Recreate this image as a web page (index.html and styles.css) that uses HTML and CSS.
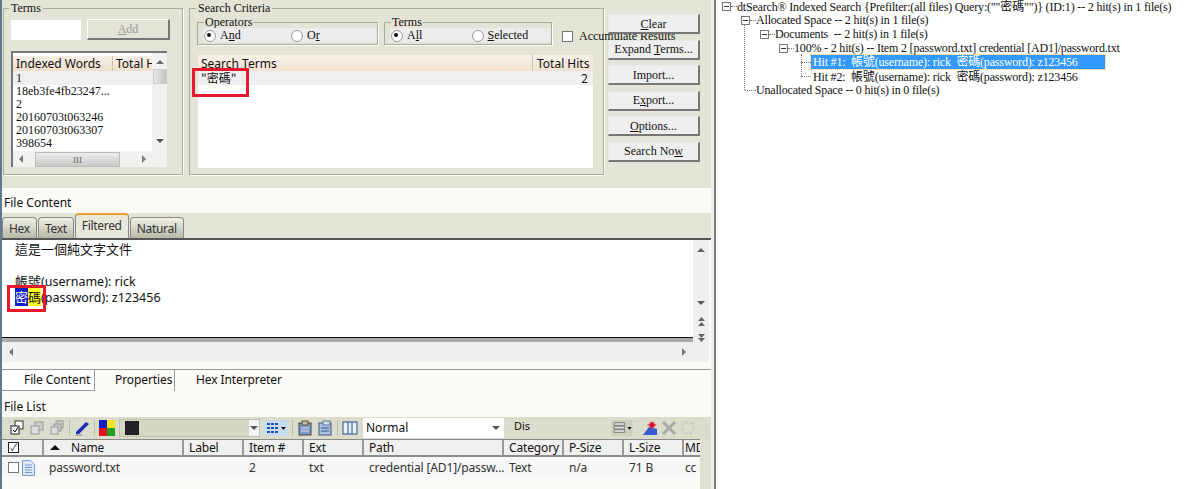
FILE: index.html
```html
<!DOCTYPE html>
<html lang="en">
<head>
    <meta charset="UTF-8">
    <title>dtSearch results</title>
    <link rel="stylesheet" href="styles.css">
</head>
<body>
    <div class="left">
        <div class="search-panel">
            <fieldset class="group terms-group">
                <legend>Terms</legend>
                <div class="add-row">
                    <div class="text-box"></div>
                    <button class="btn add-btn" type="button"><u>A</u>dd</button>
                </div>
                <div class="words">
                    <div class="words-main">
                        <div class="words-head"><span class="w-word">Indexed Words</span><span class="w-total">Total H</span></div>
                        <div class="words-row first">1</div>
                        <div class="words-row">18eb3fe4fb23247...</div>
                        <div class="words-row">2</div>
                        <div class="words-row">20160703t063246</div>
                        <div class="words-row">20160703t063307</div>
                        <div class="words-row">398654</div>
                    </div>
                    <div class="vscroll">
                        <span class="arrow up"></span>
                        <span class="thumb"></span>
                        <span class="arrow down"></span>
                    </div>
                    <div class="hscroll">
                        <span class="arrow left-a"></span>
                        <span class="hthumb">III</span>
                        <span class="arrow right-a"></span>
                    </div>
                </div>
            </fieldset>

            <fieldset class="group criteria">
                <legend>Search Criteria</legend>
                <div class="options">
                    <fieldset class="group sub operators">
                        <legend>Operators</legend>
                        <label class="radio on">A<u>n</u>d</label>
                        <label class="radio">O<u>r</u></label>
                    </fieldset>
                    <fieldset class="group sub scope">
                        <legend>Terms</legend>
                        <label class="radio on">A<u>l</u>l</label>
                        <label class="radio"><u>S</u>elected</label>
                    </fieldset>
                    <label class="accumulate"><span class="check"></span>Accumulate Results</label>
                </div>
                <div class="terms-table">
                    <div class="terms-head"><span class="t-term">Search Terms</span><span class="t-hits">Total Hits</span></div>
                    <div class="terms-row"><span>"密碼"</span><span>2</span></div>
                </div>
            </fieldset>

            <div class="actions">
                <button class="btn" type="button"><u>C</u>lear</button>
                <button class="btn" type="button">Expand <u>T</u>erms...</button>
                <button class="btn" type="button">Import...</button>
                <button class="btn" type="button">E<u>x</u>port...</button>
                <button class="btn" type="button"><u>O</u>ptions...</button>
                <button class="btn" type="button">Search No<u>w</u></button>
            </div>
            <div class="mark mark-term"></div>
        </div>

        <div class="title-bar">File Content</div>
        <div class="tab-strip">
            <span class="tab">Hex</span>
            <span class="tab">Text</span>
            <span class="tab active">Filtered</span>
            <span class="tab">Natural</span>
        </div>
        <div class="viewer">
            <div class="viewer-left">
                <div class="viewer-text">
                    <div><span class="cjk">這是一個純文字文件</span></div>
                    <div>&nbsp;</div>
                    <div><span class="cjk">帳號</span>(username): rick</div>
                    <div><span class="cjk hit-a">密</span><span class="cjk hit-b">碼</span>(password): z123456</div>
                    <div class="mark mark-hit"></div>
                </div>
                <div class="viewer-bottom">
                    <span class="arrow left-a"></span>
                    <span class="arrow right-a"></span>
                </div>
            </div>
            <div class="viewer-scroll">
                <span class="arrow up"></span>
                <span class="arrow down"></span>
                <svg class="jump" viewBox="0 0 9 10"><path d="M4.500 0L8 4H1zM4.500 5L8 9H1z" fill="#666"/></svg>
                <svg class="jump" viewBox="0 0 9 10"><path d="M1 1h7L4.500 5zM1 5h7L4.500 9z" fill="#666"/></svg>
            </div>
        </div>

        <div class="sub-tabs">
            <span class="sub-tab active">File Content</span>
            <span class="sub-tab second">Properties</span>
            <span class="sub-tab plain">Hex Interpreter</span>
        </div>
        <div class="list-title">File List</div>

        <div class="list-wrap">
            <div class="list-main">
                <div class="toolbar">
                    <svg class="ico" viewBox="0 0 16 16"><rect x="6" y="1" width="8" height="8" fill="#fff" stroke="#333"/><rect x="2" y="6" width="8" height="8" fill="#fff" stroke="#222"/><path d="M4 10l2 2 3-5" fill="none" stroke="#000"/></svg>
                    <svg class="ico" viewBox="0 0 16 16"><rect x="6" y="2" width="8" height="8" fill="#ccc" stroke="#999"/><rect x="2" y="6" width="8" height="8" fill="#ddd" stroke="#999"/></svg>
                    <svg class="ico" viewBox="0 0 16 16"><rect x="7" y="1" width="7" height="7" fill="#ccc" stroke="#999"/><rect x="5" y="4" width="7" height="7" fill="#ccc" stroke="#999"/><rect x="2" y="7" width="7" height="7" fill="#ddd" stroke="#999"/></svg>
                    <i class="sep"></i>
                    <svg class="ico" viewBox="0 0 16 16"><path d="M2 12L12 2l3 2L5 14H2z" fill="#1a2fb8"/><path d="M1 15h7" stroke="#88a" stroke-width="1"/></svg>
                    <i class="sep"></i>
                    <svg class="ico swatch" viewBox="0 0 16 16"><rect width="8" height="8" fill="#1420c8"/><rect x="8" width="8" height="8" fill="#f4e41c"/><rect y="8" width="8" height="8" fill="#e01420"/><rect x="8" y="8" width="8" height="8" fill="#20a020"/></svg>
                    <div class="color-combo"><span class="color-chip"></span><span class="combo-btn"><span class="arrow down"></span></span></div>
                    <svg class="ico wide" viewBox="0 0 24 16"><rect width="24" height="16" fill="#c8dcf0"/><path d="M3 4h11M3 8h11M3 12h11" stroke="#1a50c0" stroke-width="2" stroke-dasharray="3 1"/><path d="M17 7h5l-2.500 3z" fill="#111"/></svg>
                    <i class="sep"></i>
                    <svg class="ico" viewBox="0 0 16 16"><rect x="2" y="3" width="12" height="12" fill="#7d9cc4" stroke="#445"/><rect x="5" y="1" width="6" height="4" fill="#c8b8a8" stroke="#554"/><path d="M4 8h8M4 11h8" stroke="#dde"/></svg>
                    <svg class="ico" viewBox="0 0 16 16"><rect x="2" y="3" width="12" height="12" fill="#a8c4e4" stroke="#457"/><rect x="6" y="1" width="7" height="4" fill="#d0dcec" stroke="#679"/><path d="M4 8h8M4 11h8" stroke="#357"/></svg>
                    <i class="sep"></i>
                    <svg class="ico" viewBox="0 0 16 16"><rect x="1" y="2" width="14" height="12" fill="#e8f0f8" stroke="#24508c"/><path d="M6 2v12M10 2v12" stroke="#24508c"/></svg>
                    <div class="mode-combo">Normal<span class="arrow down"></span></div>
                    <span class="dis">Dis</span>
                    <div class="tool-right">
                        <svg class="ico wide" viewBox="0 0 24 18"><rect width="24" height="18" fill="#cfcfbe"/><path d="M3 3h12v3H3zM3 7h12v3H3zM3 11h12v3H3z" fill="#ddd" stroke="#777"/><path d="M18 8h5l-2.500 3z" fill="#111"/></svg>
                        <svg class="ico" viewBox="0 0 16 16"><path d="M1 15l6-8 8 2v6z" fill="#3a5ad0"/><path d="M10 1l1 2 2-1-1 2 3 1-3 1 1 2-2-1-1 2-1-2-2 1 1-2-3-1 3-1-1-2 2 1z" fill="#e0102c"/></svg>
                        <svg class="ico" viewBox="0 0 16 16"><path d="M2 2l12 12M14 2L2 14" stroke="#aaa" stroke-width="3"/></svg>
                        <svg class="ico" viewBox="0 0 16 16"><circle cx="8" cy="8" r="6" fill="none" stroke="#ccc" stroke-width="2.500" stroke-dasharray="3 2"/></svg>
                    </div>
                </div>
                <div class="grid grid-head">
                    <span class="cell cell-check"><span class="check checked small">✓</span></span>
                    <span class="cell"><span class="sort"></span>Name</span>
                    <span class="cell">Label</span>
                    <span class="cell">Item #</span>
                    <span class="cell">Ext</span>
                    <span class="cell">Path</span>
                    <span class="cell">Category</span>
                    <span class="cell">P-Size</span>
                    <span class="cell">L-Size</span>
                    <span class="cell">MD</span>
                </div>
                <div class="grid grid-row">
                    <span class="cell cell-check"><span class="check small"></span><svg class="doc" viewBox="0 0 13 16"><path d="M.5.5h8l4 4v11H.500z" fill="#dce8f8" stroke="#7a9ad0"/><path d="M3 5h7M3 7.500h7M3 10h7M3 12.500h7" stroke="#7a9ad0"/></svg></span>
                    <span class="cell">password.txt</span>
                    <span class="cell"></span>
                    <span class="cell">2</span>
                    <span class="cell">txt</span>
                    <span class="cell">credential [AD1]/passw...</span>
                    <span class="cell">Text</span>
                    <span class="cell">n/a</span>
                    <span class="cell">71 B</span>
                    <span class="cell">cc</span>
                </div>
            </div>
            <div class="list-side"></div>
        </div>
    </div>

    <div class="divider"></div>

    <div class="tree">
        <i class="guide g1"></i>
        <i class="guide g3"></i>
        <div class="node l0"><span class="box"></span><span class="stub"></span>dtSearch® Indexed Search {Prefilter:(all files) Query:(""密碼"")} (ID:1) -- 2 hit(s) in 1 file(s)</div>
        <div class="node l1"><span class="box"></span><span class="stub"></span>Allocated Space -- 2 hit(s) in 1 file(s)</div>
        <div class="node l2"><span class="box"></span><span class="stub"></span>Documents&nbsp; -- 2 hit(s) in 1 file(s)</div>
        <div class="node l3"><span class="box"></span><span class="stub"></span>100% - 2 hit(s) -- Item 2 [password.txt] credential [AD1]/password.txt</div>
        <div class="node l4"><span class="stub hit"></span><span class="selected">Hit #1:&nbsp; 帳號(username): rick&nbsp; 密碼(password): z123456</span></div>
        <div class="node l4"><span class="stub hit"></span><span class="plain-hit">Hit #2:&nbsp; 帳號(username): rick&nbsp; 密碼(password): z123456</span></div>
        <div class="node l1b"><span class="stub long"></span>Unallocated Space -- 0 hit(s) in 0 file(s)</div>
    </div>
</body>
</html>
```

FILE: styles.css
```css
* {
    box-sizing: border-box;
}
body {
    margin: 0;
    width: 1184px;
    height: 489px;
    overflow: hidden;
    display: flex;
    background-color: #fff;
    color: #111;
    font-family: 'Noto Sans', 'Noto Sans CJK TC', sans-serif;
    font-size: 12px;
}
u {
    text-decoration: underline;
}
.left {
    width: 711px;
    height: 489px;
    display: flex;
    flex-direction: column;
    border-left: 2px solid #5d7a90;
    background-color: #fbfaf6;
    flex: none;
}
.divider {
    width: 5px;
    background-color: #f1f0ec;
    border-right: 2px solid #7d7d7d;
    flex: none;
}

/* search panel */
.search-panel {
    position: relative;
    height: 188px;
    flex: none;
    display: flex;
    align-items: flex-start;
    padding: 2px 0 0 1px;
    background-color: #e3e4d6;
    font-family: 'Liberation Serif', 'Noto Sans CJK TC', serif;
}
.group {
    margin: 0;
    padding: 0;
    min-width: 0;
    border: 1px solid #a9ab9b;
    box-shadow: 1px 1px 0 #fff;
}
.group legend {
    padding: 0 2px;
    line-height: 12px;
    font-size: 12px;
}
.terms-group {
    width: 180px;
    height: 173px;
    padding: 5px 8px 0 7px;
    flex: none;
}
.terms-group legend {
    margin-left: -2px;
}
.add-row {
    display: flex;
    gap: 6px;
    align-items: center;
}
.text-box {
    width: 70px;
    height: 20px;
    background-color: #fff;
}
.btn {
    width: 92px;
    height: 20px;
    padding: 1px 0 0;
    background-color: #efefef;
    color: #111;
    border: 1px solid #e8e8e8;
    border-right: 2px solid #777;
    border-bottom: 2px solid #777;
    font-family: 'Liberation Serif', serif;
    font-size: 12px;
}
.add-btn {
    width: 83px;
    height: 21px;
    color: #9a9a9a;
    border-left-color: #fff;
    border-top-color: #fff;
    background-color: #e3e4d6;
}
.words {
    margin-top: 11px;
    width: 156px;
    height: 116px;
    display: grid;
    grid-template-columns: 139px 15px;
    grid-template-rows: 98px 16px;
    background-color: #fff;
    border-left: 2px solid #777;
    border-top: 2px solid #777;
}
.words-main {
    overflow: hidden;
    padding-top: 3px;
    background-color: #fff;
}
.words-head {
    display: flex;
    height: 15px;
    line-height: 16px;
    background: linear-gradient(#f5efe7, #f0dfcc);
    font-family: 'Noto Sans', sans-serif;
}
.w-word {
    width: 100px;
    padding-left: 3px;
    border-right: 1px solid #c9c2b6;
    flex: none;
    white-space: nowrap;
}
.w-total {
    padding-left: 3px;
    white-space: nowrap;
}
.words-row {
    height: 13px;
    line-height: 13px;
    padding-left: 3px;
}
.words-row.first {
    background-color: #f0f0f0;
    height: 14px;
    line-height: 15px;
}
.vscroll {
    background-color: #f1f1ef;
    display: flex;
    flex-direction: column;
    align-items: center;
    padding-top: 7px;
}
.thumb {
    width: 14px;
    height: 15px;
    margin-top: 5px;
    margin-bottom: auto;
    background: linear-gradient(90deg, #e8e8e8, #c4c4c4);
    border: 1px solid #ccc;
}
.vscroll .down {
    margin-bottom: 8px;
}
.hscroll {
    grid-column: 1 / 3;
    display: flex;
    align-items: center;
    padding: 0 6px;
    background-color: #f1f1ef;
}
.hthumb {
    width: 85px;
    height: 15px;
    margin: 0 22px 0 12px;
    text-align: center;
    line-height: 14px;
    font-size: 9px;
    color: #666;
    background: linear-gradient(#eee, #c8c8c8);
    border: 1px solid #bbb;
}

/* small triangles used by every scrollbar */
.arrow {
    display: inline-block;
    width: 0;
    height: 0;
    flex: none;
}
.arrow.up {
    border: 4px solid transparent;
    border-top: 0;
    border-bottom: 4px solid #666;
}
.arrow.down {
    border: 4px solid transparent;
    border-bottom: 0;
    border-top: 4px solid #555;
}
.arrow.left-a {
    border: 4px solid transparent;
    border-left: 0;
    border-right: 4px solid #777;
}
.arrow.right-a {
    border: 4px solid transparent;
    border-right: 0;
    border-left: 4px solid #777;
}

.criteria {
    width: 415px;
    height: 173px;
    margin-left: 6px;
    padding: 2px 9px 0 7px;
    flex: none;
}
.criteria > legend {
    margin-left: -1px;
}
.options {
    display: flex;
    align-items: flex-end;
}
.sub {
    display: flex;
    height: 29px;
    padding-left: 5px;
    background-color: #e3e4d6;
    flex: none;
}
.sub legend {
    margin-left: 1px;
    padding: 0 1px;
}
.operators {
    width: 181px;
}
.operators .radio {
    width: 89px;
    background-color: #ececec;
}
.scope {
    width: 168px;
    margin-left: 6px;
}
.scope .radio {
    width: 83px;
    background-color: #ececec;
}
.radio {
    display: block;
    height: 14px;
    padding-left: 17px;
    line-height: 14px;
    position: relative;
}
.radio::before {
    content: "";
    position: absolute;
    left: 1px;
    top: 2px;
    width: 10px;
    height: 10px;
    border-radius: 50%;
    background-color: #fff;
    border: 1px solid #999;
}
.radio.on::after {
    content: "";
    position: absolute;
    left: 4px;
    top: 5px;
    width: 4px;
    height: 4px;
    border-radius: 50%;
    background-color: #111;
}
.accumulate {
    display: flex;
    align-items: center;
    margin: 0 0 1px 10px;
    gap: 6px;
    height: 16px;
    white-space: nowrap;
}
.check {
    display: inline-block;
    width: 11px;
    height: 11px;
    background-color: #fff;
    border: 1px solid #777;
    flex: none;
}
.terms-table {
    margin: 10px 0 0 1px;
    height: 113px;
    width: 395px;
    background-color: #fff;
}
.terms-head {
    display: flex;
    height: 16px;
    line-height: 17px;
    background: linear-gradient(#f7f2ea, #f3e2d1);
    font-family: 'Noto Sans', sans-serif;
}
.t-term {
    width: 335px;
    padding-left: 3px;
    border-right: 1px solid #c9c2b6;
}
.t-hits {
    padding-left: 4px;
}
.terms-row {
    display: flex;
    justify-content: space-between;
    height: 14px;
    line-height: 14px;
    padding: 0 5px 0 3px;
    background-color: #f0f0f0;
    font-family: 'Noto Sans CJK TC', sans-serif;
}
.actions {
    display: flex;
    flex-direction: column;
    gap: 5.600px;
    margin: 12px 0 0 4px;
    position: relative;
    z-index: 1;
}
.mark {
    position: absolute;
    border: 3px solid #e8192c;
}
.mark-term {
    left: 190px;
    top: 68px;
    width: 57px;
    height: 29px;
}

/* file content */
.title-bar {
    height: 25px;
    line-height: 29px;
    padding-left: 2px;
    flex: none;
}
.tab-strip {
    height: 27px;
    flex: none;
    display: flex;
    align-items: flex-end;
    gap: 1px;
    background-color: #e3e4d6;
    border-bottom: 2px solid #555;
}
.tab {
    height: 21px;
    padding: 0 6px;
    line-height: 21px;
    letter-spacing: -0.3px;
    background: linear-gradient(#f0f0e8, #b9b9a8);
    border: 1px solid #888;
    border-bottom: 0;
    border-radius: 4px 4px 0 0;
    color: #333;
}
.tab.active {
    height: 25px;
    line-height: 22px;
    background: #e8e8da;
    border-top: 2px solid #f0a030;
}
.viewer {
    height: 122px;
    flex: none;
    display: flex;
}
.viewer-left {
    flex: 1;
    display: flex;
    flex-direction: column;
}
.viewer-text {
    position: relative;
    height: 98px;
    flex: none;
    padding: 2px 0 0 13px;
    font-size: 12.500px;
    line-height: 16px;
    background-color: #fff;
    border-bottom: 1px solid #111;
}
.cjk {
    font-size: 13px;
    line-height: 1;
}
.hit-a {
    background-color: #1020c8;
    color: #fff;
}
.hit-b {
    background-color: #ffff20;
}
.mark-hit {
    left: 5px;
    top: 45px;
    width: 39px;
    height: 27px;
}
.viewer-scroll {
    width: 16px;
    margin-right: 2px;
    display: flex;
    flex-direction: column;
    align-items: center;
    padding-top: 8px;
    background-color: #efefef;
}
.viewer-scroll .down {
    margin-top: 49px;
    margin-bottom: 12px;
}
.jump {
    width: 9px;
    height: 10px;
    margin-bottom: 6px;
    flex: none;
}
.viewer-bottom {
    height: 24px;
    flex: none;
    display: flex;
    align-items: center;
    justify-content: space-between;
    padding: 0 7px;
    background-color: #efefef;
    border-top: 4px solid #ababab;
}
.sub-tabs {
    height: 29px;
    flex: none;
    display: flex;
    align-items: flex-start;
    margin-top: 7px;
    border-top: 1px solid #9a9a9a;
}
.sub-tab {
    height: 21px;
    line-height: 19px;
    white-space: nowrap;
    letter-spacing: -0.1px;
}
.sub-tab.active {
    width: 93px;
    padding-left: 22px;
    background-color: #fff;
    border-right: 1px solid #999;
    border-bottom: 1px solid #999;
}
.sub-tab.second {
    width: 80px;
    padding-left: 20px;
    border-right: 1px solid #999;
}
.sub-tab.plain {
    padding-left: 21px;
}
.list-title {
    height: 19px;
    line-height: 18px;
    padding-left: 2px;
    flex: none;
}

/* file list */
.list-wrap {
    flex: 1;
    display: flex;
    min-height: 0;
}
.list-main {
    width: 698px;
    flex: none;
}
.list-side {
    flex: 1;
    background-color: #dfe0d0;
}
.toolbar {
    position: relative;
    width: 709px;
    height: 22px;
    display: flex;
    align-items: center;
    gap: 4px;
    padding-left: 7px;
    background-color: #dcdccc;
}
.ico {
    width: 16px;
    height: 16px;
    flex: none;
}
.ico.wide {
    width: 24px;
}
.sep {
    width: 1px;
    height: 16px;
    background-color: #bdbdae;
    flex: none;
}
.color-combo {
    width: 141px;
    height: 18px;
    display: flex;
    align-items: center;
    justify-content: space-between;
    padding-left: 5px;
    flex: none;
    background-color: #d6d6c4;
    border: 1px solid #c0c0ae;
}
.color-chip {
    width: 14px;
    height: 14px;
    background-color: #222;
}
.combo-btn {
    width: 10px;
    height: 16px;
    display: flex;
    align-items: center;
    justify-content: center;
    background-color: #f4f4f4;
}
.mode-combo {
    width: 141px;
    height: 20px;
    line-height: 20px;
    margin-left: 1px;
    padding: 0 4px 0 3px;
    display: flex;
    align-items: center;
    justify-content: space-between;
    background-color: #fff;
    flex: none;
}
.dis {
    margin: 0 0 6px 6px;
    font-size: 11px;
}
.tool-right {
    margin-left: auto;
    margin-right: 15px;
    display: flex;
    align-items: center;
    gap: 3px;
}
.tool-right .wide {
    margin-right: 5px;
}
.grid {
    display: grid;
    padding-left: 2px;
    grid-template-columns: 40px 140px 60px 60px 60px 140px 60px 60px 60px 16px;
}
.grid-head {
    height: 18px;
    line-height: 17px;
    background-color: #f0f0f0;
    border-top: 1px solid #888;
    border-bottom: 2px solid #8c8c8c;
}
.grid-head .cell {
    border-right: 2px solid #9a9a9a;
    letter-spacing: -0.15px;
}
.grid-head .cell:last-child {
    border-right: 0;
}
.grid-row {
    height: 20px;
    padding-top: 1px;
    background-color: #f7f7f7;
    color: #333;
    letter-spacing: -0.15px;
}
.cell {
    padding-left: 5px;
    white-space: nowrap;
    overflow: hidden;
    display: flex;
    align-items: center;
}
.cell:last-child {
    padding-left: 1px;
}
.cell-check {
    gap: 3px;
    padding-left: 4px;
}
.check.small {
    width: 11px;
    height: 11px;
}
.check.checked {
    font-size: 10px;
    line-height: 9px;
    text-align: center;
    border-color: #222;
}
.doc {
    width: 13px;
    height: 16px;
}
.sort {
    width: 0;
    height: 0;
    margin: 0 11px 0 1px;
    border: 5px solid transparent;
    border-top: 0;
    border-bottom: 5px solid #111;
}

/* hit tree */
.tree {
    position: relative;
    flex: 1;
    margin-top: -1px;
    font-family: 'Liberation Serif', 'Noto Sans CJK TC', serif;
    font-size: 12px;
    letter-spacing: -0.18px;
    background-color: #fff;
}
.node {
    display: flex;
    align-items: center;
    height: 14px;
    white-space: nowrap;
}
.l0 { padding-left: 6px; }
.l1 { padding-left: 25px; }
.l2 { padding-left: 44px; }
.l3 { padding-left: 63px; }
.l4 { padding-left: 85px; }
.l1b { padding-left: 29px; }
.box {
    width: 9px;
    height: 9px;
    flex: none;
    background: linear-gradient(#333, #333) center / 5px 1px no-repeat #fff;
    border: 1px solid #777;
}
.stub {
    width: 6px;
    border-top: 1px dotted #777;
    flex: none;
}
.stub.long {
    width: 11px;
}
.stub.hit {
    width: 10px;
}
.selected {
    width: 294px;
    height: 14px;
    padding-left: 2px;
    line-height: 14px;
    background-color: #3399ff;
    color: #fff;
    outline: 1px dotted #ffc06a;
}
.plain-hit {
    padding-left: 2px;
}
.guide {
    position: absolute;
    width: 0;
    border-left: 1px dotted #777;
}
.g1 { left: 28px; top: 25px; height: 66px; }
.g3 { left: 85px; top: 55px; height: 22px; }
```
